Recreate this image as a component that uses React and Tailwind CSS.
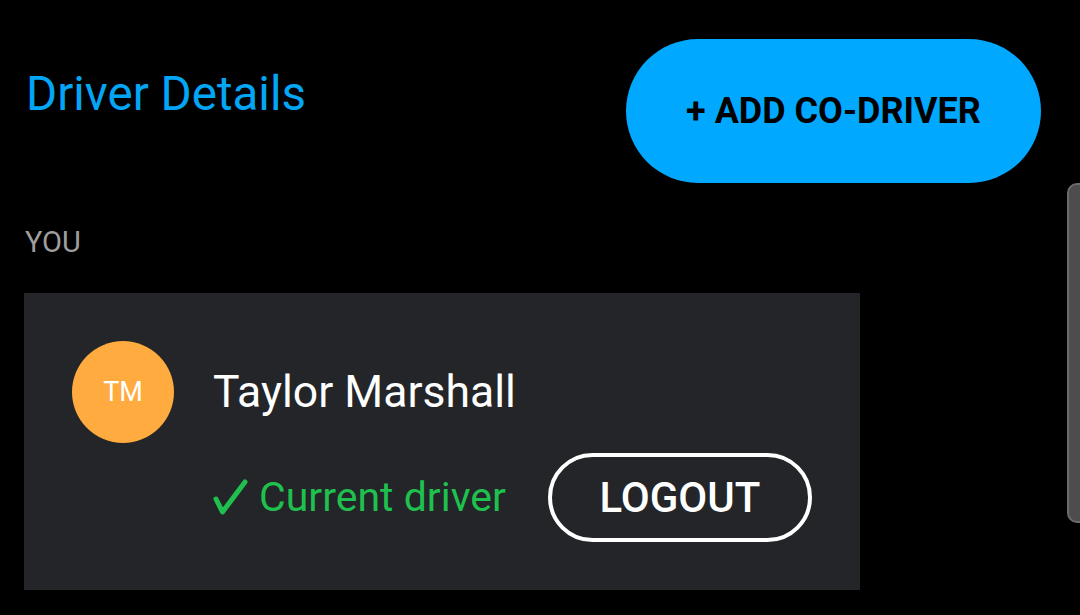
const CheckIcon = () => (
  <svg
    width="35"
    height="37"
    viewBox="0 0 35 37"
    fill="none"
    stroke="currentColor"
    strokeWidth="5"
    strokeLinecap="round"
    strokeLinejoin="round"
    className="shrink-0"
  >
    <path d="M3 20 L9.5 33 L32 3" />
  </svg>
);

export default function App() {
  return (
    <div className="relative h-[615px] w-[1080px] overflow-hidden bg-black font-['Roboto','Liberation_Sans',sans-serif]">
      {/* Header */}
      <div className="flex items-start justify-between pl-[26px] pr-[39px] pt-[39px]">
        <h1 className="mt-[32px] text-[47.5px] font-normal leading-none text-[#03a6f4]">
          Driver Details
        </h1>
        <button className="flex h-[144px] w-[415px] items-center justify-center rounded-full bg-[#00a8ff] text-[36px] font-bold leading-none text-black">
          + ADD CO-DRIVER
        </button>
      </div>

      <div className="pl-[24px]">
        <div className="mt-[45px] pl-[1px] text-[29px] leading-none text-[#9e9e9e]">
          YOU
        </div>

        {/* Driver card */}
        <div className="mt-[36px] flex w-[836px] gap-[39px] bg-[#232528] p-[48px]">
          <div className="flex h-[102px] w-[102px] shrink-0 items-center justify-center rounded-full bg-[#ffab40] text-[27px] leading-none text-white">
            TM
          </div>
          <div className="flex flex-col">
            <div className="flex h-[102px] items-center whitespace-nowrap text-[44.5px] leading-none text-white">
              Taylor Marshall
            </div>
            <div className="mt-[10px] flex items-center gap-[42px]">
              <span className="flex shrink-0 items-center gap-[11px] whitespace-nowrap text-[41px] leading-none text-[#1fc04e]">
                <CheckIcon />
                Current driver
              </span>
              <button className="flex h-[89px] w-[264px] shrink-0 items-center justify-center rounded-full border-[4px] border-white text-[42px] font-medium leading-none text-white">
                LOGOUT
              </button>
            </div>
          </div>
        </div>
      </div>

      {/* Scroll handle at right edge */}
      <div className="absolute left-[1067px] top-[183px] h-[340px] w-[24px] rounded-[10px] border-2 border-[#6b6b6b] bg-[#4d4d4d]" />
    </div>
  );
}
